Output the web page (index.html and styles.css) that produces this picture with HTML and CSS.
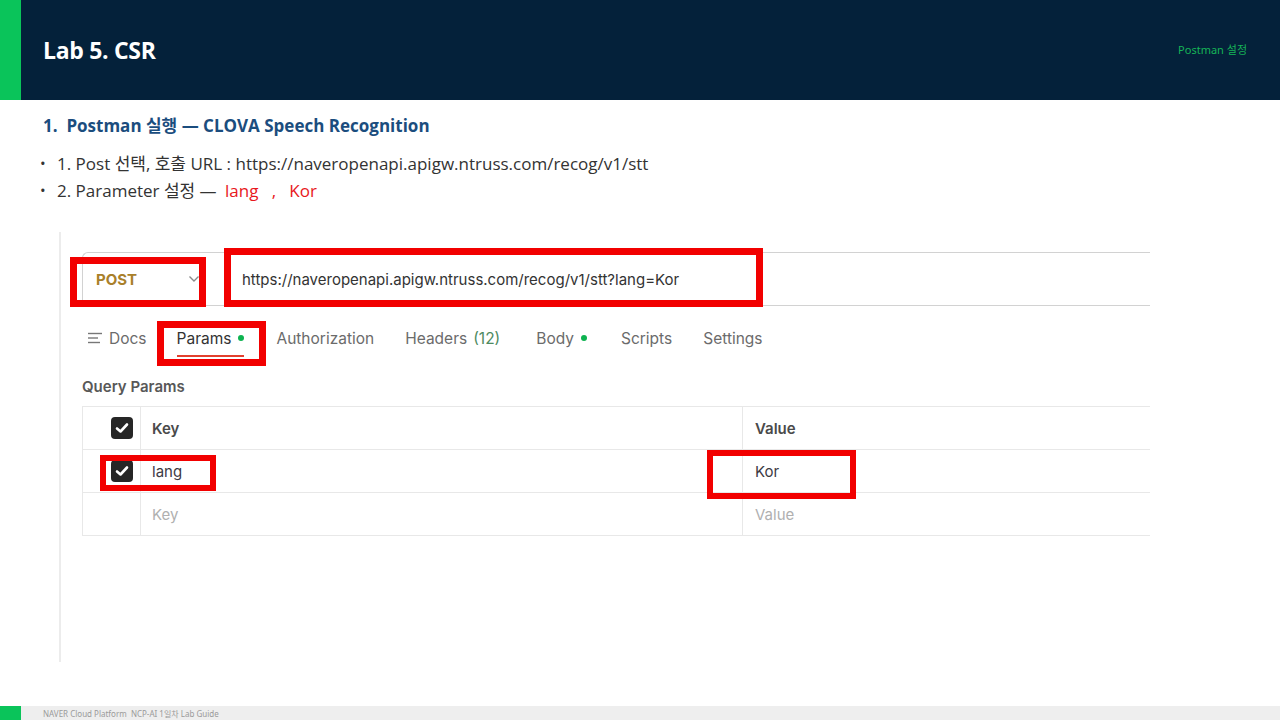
FILE: index.html
```html
<!DOCTYPE html>
<html lang="ko">
<head>
<meta charset="utf-8">
<title>Lab 5. CSR</title>
<link rel="stylesheet" href="styles.css">
</head>
<body>
<div class="slide">
  <header class="top">
    <div class="accent"></div>
    <h1 class="title">Lab 5. CSR</h1>
    <span class="section">Postman 설정</span>
  </header>

  <main class="content">
    <h2 class="heading">1.&nbsp; Postman 실행 — CLOVA Speech Recognition</h2>
    <ul class="steps">
      <li>1. Post 선택, 호출 URL : https://naveropenapi.apigw.ntruss.com/recog/v1/stt</li>
      <li>2. Parameter 설정 — <span class="red">lang&nbsp;&nbsp;&nbsp;,&nbsp;&nbsp;&nbsp;Kor</span></li>
    </ul>

    <div class="shot">
      <div class="reqbar">
        <div class="method">
          <span class="method-name">POST</span>
          <svg class="chev" width="12" height="8" viewBox="0 0 12 8"><polyline points="1.5,1.5 6,6 10.5,1.5" fill="none" stroke="#8a8a8a" stroke-width="1.4"/></svg>
        </div>
        <div class="url">https://naveropenapi.apigw.ntruss.com/recog/v1/stt?lang=Kor</div>
      </div>

      <nav class="tabs">
        <span class="tab docs">
          <svg width="14" height="12" viewBox="0 0 14 12"><line x1="0" y1="1.5" x2="14" y2="1.5" stroke="#777" stroke-width="1.4"/><line x1="0" y1="6" x2="10" y2="6" stroke="#777" stroke-width="1.4"/><line x1="0" y1="10.5" x2="12" y2="10.5" stroke="#777" stroke-width="1.4"/></svg>
          Docs
        </span>
        <span class="tab active">Params <i class="dot"></i></span>
        <span class="tab">Authorization</span>
        <span class="tab headers">Headers <span class="count">(12)</span></span>
        <span class="tab body">Body <i class="dot"></i></span>
        <span class="tab">Scripts</span>
        <span class="tab">Settings</span>
      </nav>

      <div class="qp-title">Query Params</div>

      <div class="ptable">
        <div class="prow">
          <div class="pc check"><span class="cb"><svg width="14" height="12" viewBox="0 0 14 12"><polyline points="2,6.5 5.5,9.5 12,2.5" fill="none" stroke="#fff" stroke-width="2.6" stroke-linecap="round" stroke-linejoin="round"/></svg></span></div>
          <div class="pc key head">Key</div>
          <div class="pc val head">Value</div>
        </div>
        <div class="prow">
          <div class="pc check"><span class="cb"><svg width="14" height="12" viewBox="0 0 14 12"><polyline points="2,6.5 5.5,9.5 12,2.5" fill="none" stroke="#fff" stroke-width="2.6" stroke-linecap="round" stroke-linejoin="round"/></svg></span></div>
          <div class="pc key filled">lang</div>
          <div class="pc val filled">Kor</div>
        </div>
        <div class="prow">
          <div class="pc check"></div>
          <div class="pc key ph">Key</div>
          <div class="pc val ph">Value</div>
        </div>
      </div>

      <div class="mark mark-post"></div>
      <div class="mark mark-url"></div>
      <div class="mark mark-params"></div>
      <div class="mark thin mark-lang"></div>
      <div class="mark thin mark-kor"></div>
    </div>
  </main>

  <footer class="foot">
    <div class="accent"></div>
    <span class="foot-text">NAVER Cloud Platform&nbsp; NCP-AI 1일차 Lab Guide</span>
  </footer>
</div>
</body>
</html>
```

FILE: styles.css
```css
* { box-sizing: border-box; }
html, body { margin: 0; padding: 0; }
body {
  width: 1280px;
  height: 720px;
  overflow: hidden;
  background: #fff;
  font-family: "Noto Sans", "Noto Sans CJK KR", sans-serif;
}
.slide {
  width: 1280px;
  height: 720px;
  display: flex;
  flex-direction: column;
}

/* header */
.top {
  height: 100px;
  flex: 0 0 100px;
  background: #04213a;
  display: flex;
  align-items: center;
}
.top .accent {
  width: 21px;
  height: 100%;
  background: #0ac45a;
}
.title {
  margin: 0 0 0 22px;
  color: #fff;
  font-family: "Open Sans", "Noto Sans CJK KR", sans-serif;
  font-weight: 700;
  font-size: 23px;
  letter-spacing: -0.3px;
  line-height: 30px;
  flex: 1;
}
.section {
  color: #16b457;
  font-size: 11px;
  font-family: "Noto Sans", "Noto Sans CJK KR", sans-serif;
  margin-right: 33px;
  margin-bottom: 2px;
}

/* content */
.content {
  flex: 1;
  padding: 14px 0 0 43px;
  display: flex;
  flex-direction: column;
}
.heading {
  margin: 0;
  font-family: "Open Sans", "Noto Sans CJK KR", sans-serif;
  font-weight: 700;
  font-size: 17px;
  line-height: 24px;
  color: #1b4d7e;
  white-space: pre;
}
.steps {
  list-style: none;
  margin: 12px 0 0 -3px;
  padding: 0;
}
.steps li {
  display: flex;
  align-items: center;
  font-family: "Open Sans", "Noto Sans CJK KR", sans-serif;
  font-size: 17px;
  line-height: 27px;
  color: #333;
  white-space: pre;
}
.steps li::before {
  content: "•";
  width: 17px;
  flex: 0 0 17px;
  font-size: 15px;
}
.red { color: #e8171c; margin-left: 4px; }

/* postman screenshot */
.shot {
  position: relative;
  margin: 28px 0 0 16px;
  width: 1091px;
  height: 430px;
  border-left: 2px solid #ececec;
  padding: 20px 0 0 21px;
  font-family: Inter, "Noto Sans", sans-serif;
}
.reqbar {
  display: flex;
  height: 54px;
  border: 1px solid #d2d2d2;
  border-right: none;
  border-radius: 6px 0 0 6px;
  align-items: center;
}
.method {
  width: 130px;
  display: flex;
  align-items: center;
  padding-left: 13px;
  height: 100%;
}
.method-name {
  color: #a9802a;
  font-weight: 700;
  font-size: 15px;
  flex: 1;
}
.chev { margin-right: 13px; }
.url {
  padding-left: 29px;
  font-size: 15px;
  color: #333;
}

.tabs {
  display: flex;
  align-items: center;
  gap: 31px;
  height: 44px;
  margin-top: 10px;
  padding-left: 6px;
}
.tab {
  font-size: 15.5px;
  color: #6b6b6b;
  display: flex;
  align-items: center;
  gap: 7px;
  height: 100%;
  position: relative;
}
.tab.active { color: #333; margin-left: -1px; margin-right: 1px; }
.tab.active::after {
  content: "";
  position: absolute;
  left: 0;
  right: 0;
  bottom: 3px;
  height: 2px;
  background: #e2402e;
}
.tab.headers { margin-right: 5px; }
.tab.body { margin-right: 3px; }
.count { color: #4e8a61; margin-left: -1px; }
.dot {
  width: 6px;
  height: 6px;
  border-radius: 50%;
  background: #0db350;
  display: inline-block;
}

.qp-title {
  margin-top: 17px;
  font-size: 15px;
  font-weight: 600;
  color: #585858;
  line-height: 20px;
}

.ptable {
  margin-top: 9px;
  border-top: 1px solid #e8e8e8;
  border-left: 1px solid #e8e8e8;
}
.prow {
  display: flex;
  height: 43px;
  border-bottom: 1px solid #e8e8e8;
}
.pc {
  display: flex;
  align-items: center;
  font-size: 15px;
}
.pc.check {
  width: 58px;
  justify-content: flex-end;
  padding-right: 7px;
  border-right: 1px solid #e8e8e8;
}
.pc.key {
  width: 602px;
  padding-left: 11px;
  border-right: 1px solid #e8e8e8;
}
.pc.val {
  flex: 1;
  padding-left: 12px;
}
.cb {
  width: 22px;
  height: 22px;
  border-radius: 4px;
  background: #262626;
  display: flex;
  align-items: center;
  justify-content: center;
}
.head { font-weight: 600; color: #4a4a4a; }
.filled { color: #3d3a44; }
.ph { color: #b0b0b0; }

/* annotation boxes */
.mark {
  position: absolute;
  border: 7px solid #f20000;
}
.mark.thin { border-width: 6px; }
.mark-post   { left: 9px;   top: 25px;  width: 136px; height: 50px; }
.mark-url    { left: 163px; top: 16px;  width: 539px; height: 59px; }
.mark-params { left: 96px;  top: 89px;  width: 109px; height: 45px; }
.mark-lang   { left: 39px;  top: 223px; width: 116px; height: 36px; }
.mark-kor    { left: 646px; top: 218px; width: 149px; height: 49px; }

/* footer */
.foot {
  height: 14px;
  flex: 0 0 14px;
  background: #eeeeee;
  display: flex;
  align-items: center;
}
.foot .accent {
  width: 21px;
  height: 100%;
  background: #0ac45a;
}
.foot-text {
  margin-left: 22px;
  font-size: 8px;
  color: #9a9a9a;
  font-family: "Noto Sans", "Noto Sans CJK KR", sans-serif;
}
```
